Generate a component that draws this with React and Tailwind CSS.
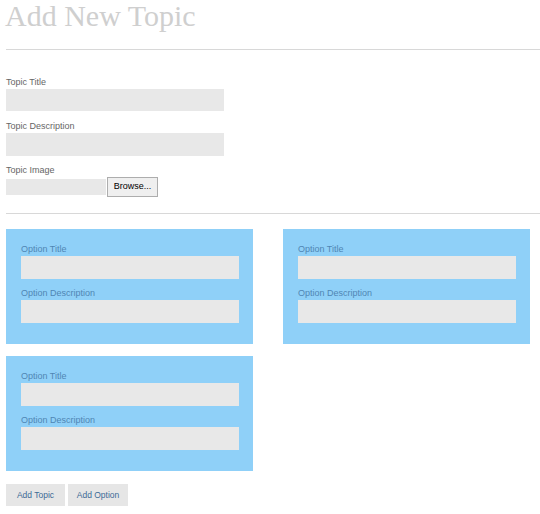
import React from 'react';

const Field = ({ label, inBox, h = 'h-[23px]' }) => (
  <div>
    <div className={`text-[9px] leading-[12px] ${inBox ? 'text-[#4f86b4]' : 'text-[#666]'}`}>{label}</div>
    <div className={`mt-px ${h} w-[218px] bg-[#e8e8e8]`}></div>
  </div>
);

const OptionBox = () => (
  <div className="w-[247px] h-[115px] bg-[#8fd0f8] pt-[14px] pl-[15px]">
    <Field label="Option Title" inBox />
    <div className="mt-[8px]">
      <Field label="Option Description" inBox />
    </div>
  </div>
);

const App = () => {
  return (
    <div className="w-[540px] h-[514px] bg-white overflow-hidden font-['Liberation_Sans',Arial,sans-serif]">
      <h1 className="ml-[5px] text-[30px] leading-[32px] text-[#cfcfcf] font-['Liberation_Serif','Times_New_Roman',serif]">
        Add New Topic
      </h1>
      <div className="mt-[17px] ml-[6px] border-t border-[#d8d8d8]"></div>

      <div className="ml-[6px] mt-[26px]">
        <Field label="Topic Title" h="h-[22px]" />
        <div className="mt-[9px]">
          <Field label="Topic Description" />
        </div>
        <div className="mt-[8px]">
          <div className="text-[9px] leading-[12px] text-[#666]">Topic Image</div>
          <div className="mt-px flex items-center">
            <div className="h-[16px] w-[100px] bg-[#e8e8e8]"></div>
            <button className="ml-px h-[20px] w-[51px] border border-[#adadad] bg-[#efefef] text-[9px] text-black">
              Browse...
            </button>
          </div>
        </div>
      </div>

      <div className="mt-[16px] ml-[6px] border-t border-[#d8d8d8]"></div>

      <div className="ml-[6px] mt-[15px] grid grid-cols-[247px_247px] gap-x-[30px] gap-y-[12px]">
        <OptionBox />
        <OptionBox />
        <OptionBox />
      </div>

      <div className="ml-[6px] mt-[13px] flex gap-[3px]">
        <button className="h-[22px] w-[59px] bg-[#e6e6e6] text-[8.5px] text-[#3d6a96]">Add Topic</button>
        <button className="h-[22px] w-[60px] bg-[#e6e6e6] text-[8.5px] text-[#3d6a96]">Add Option</button>
      </div>
    </div>
  );
};

export default App;
